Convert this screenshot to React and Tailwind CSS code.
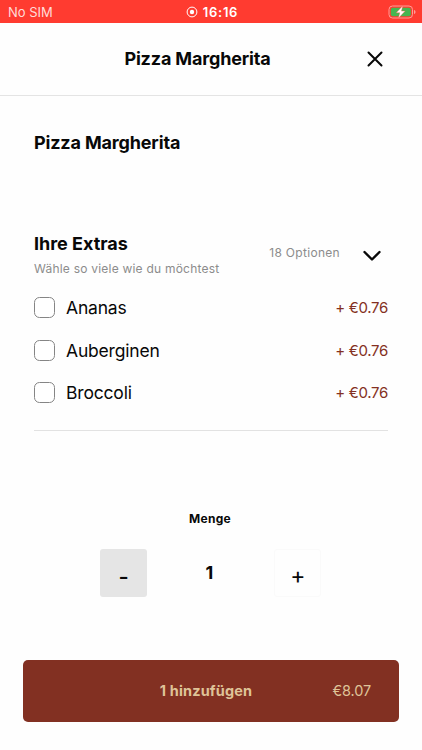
const extras = [
  { name: "Ananas", price: "+ €0.76" },
  { name: "Auberginen", price: "+ €0.76" },
  { name: "Broccoli", price: "+ €0.76" },
];

function StatusBar() {
  return (
    <div className="grid h-[23px] shrink-0 grid-cols-3 items-center bg-[#ff3b30] pl-2 pr-1.5 text-white">
      <span className="text-[13px] leading-4 text-[#ffdcd8]">No SIM</span>
      <div className="flex items-center justify-center gap-[5px]">
        <svg width="12" height="12" viewBox="0 0 12 12" fill="none">
          <circle cx="6" cy="6" r="4.900" stroke="currentColor" strokeWidth="1" />
          <circle cx="6" cy="6" r="2.200" fill="currentColor" />
        </svg>
        <span className="text-[13px] font-semibold leading-4 tracking-[0.7px]">16:16</span>
      </div>
      <svg className="justify-self-end" width="28" height="14" viewBox="0 0 28 14" fill="none">
        <rect x="1" y="1" width="23.500" height="12" rx="3.500" stroke="#ff9d97" />
        <rect x="2.800" y="2.800" width="20" height="8.400" rx="2" fill="#45b651" />
        <path d="M26 5v4c1-.3 1.500-1 1.500-2S27 5.300 26 5z" fill="#ff9d97" />
        <path d="M14.800.7 8.200 7.800h3.600l-1.500 5.500 6.900-7.200h-3.700z" fill="white" stroke="#ff5a48" strokeWidth=".4" />
      </svg>
    </div>
  );
}

function Header() {
  return (
    <header className="flex h-[73px] shrink-0 items-center border-b border-[#e4e4e4] pb-px pl-[34px] pr-[35px]">
      <h1 className="flex-1 pr-[2px] text-center text-[18px] font-bold leading-6 tracking-[-0.16px]">Pizza Margherita</h1>
      <button className="flex h-6 w-6 items-center justify-center" aria-label="Schließen">
        <svg width="16" height="16" viewBox="0 0 16 16" stroke="currentColor" strokeWidth="2" strokeLinecap="round">
          <path d="M1.500 1.500 14.500 14.500M14.500 1.500 1.500 14.500" />
        </svg>
      </button>
    </header>
  );
}

export default function App() {
  return (
    <div className="flex h-[750px] w-[422px] flex-col overflow-hidden bg-[#fefefe] font-['Inter','Liberation_Sans',sans-serif] text-[#080808]">
      <StatusBar />
      <Header />
      <main className="px-[34px]">
        <h2 className="mt-[35px] text-[18px] font-bold leading-6 tracking-[-0.16px]">Pizza Margherita</h2>
        <section className="mt-[77px] border-b border-[#e2e2e2] pb-[15px]">
          <div className="flex h-[55px] items-start justify-between">
            <div>
              <h3 className="text-[18px] font-bold leading-6 tracking-[-0.02px]">Ihre Extras</h3>
              <p className="mt-[5px] text-[12px] leading-4 tracking-[0.22px] text-[#8c8c8c]">Wähle so viele wie du möchtest</p>
            </div>
            <div className="flex pr-[6px] pt-[13px]">
              <span className="text-[12px] leading-4 tracking-[0.3px] text-[#8c8c8c]">18 Optionen</span>
              <svg className="ml-[22px] mt-[5px]" width="20" height="12" viewBox="0 0 20 12" fill="none" stroke="currentColor" strokeWidth="2.400" strokeLinecap="round" strokeLinejoin="round">
                <path d="m2.500 2 7.500 7.500L17.500 2" />
              </svg>
            </div>
          </div>
          <ul>
            {extras.map((extra) => (
              <li key={extra.name} className="flex h-[42.500px] items-center">
                <span className="mb-px h-[21px] w-[21px] rounded-[5.500px] border border-[#858585] bg-white" />
                <span className="ml-[11px] text-[17.500px] leading-6 tracking-[-0.18px]">{extra.name}</span>
                <span className="ml-auto text-[15px] leading-5 tracking-[-0.3px] text-[#843022]">{extra.price}</span>
              </li>
            ))}
          </ul>
        </section>
      </main>
      <section className="mt-[80px] flex flex-col items-center pr-px">
        <h4 className="pr-px text-[12px] font-bold leading-4 tracking-[0.3px]">Menge</h4>
        <div className="mt-[22.500px] flex w-[222px] items-center justify-between">
          <button className="flex h-[47.500px] w-[47.500px] items-center justify-center rounded-[3px] bg-[#e5e5e5] pt-2 text-[20px] font-semibold leading-6">
            <span className="scale-x-110">-</span>
          </button>
          <span className="pr-[2px] text-[18px] font-bold leading-6">1</span>
          <button className="flex h-[47.500px] w-[47.500px] items-center justify-center rounded-[3px] border border-[#fafafa] pt-1.5 text-[23px] leading-6">+</button>
        </div>
      </section>
      <button className="mx-[23px] mt-[63px] grid h-[62px] shrink-0 grid-cols-[80px_1fr_90px] items-center rounded-[5px] bg-[#823022] text-[#dfc398]">
        <span />
        <span className="text-[14.500px] font-bold leading-5 tracking-[0.15px]">1 hinzufügen</span>
        <span className="pr-[28px] text-right text-[14.500px] leading-5 tracking-[-0.15px]">€8.07</span>
      </button>
    </div>
  );
}
